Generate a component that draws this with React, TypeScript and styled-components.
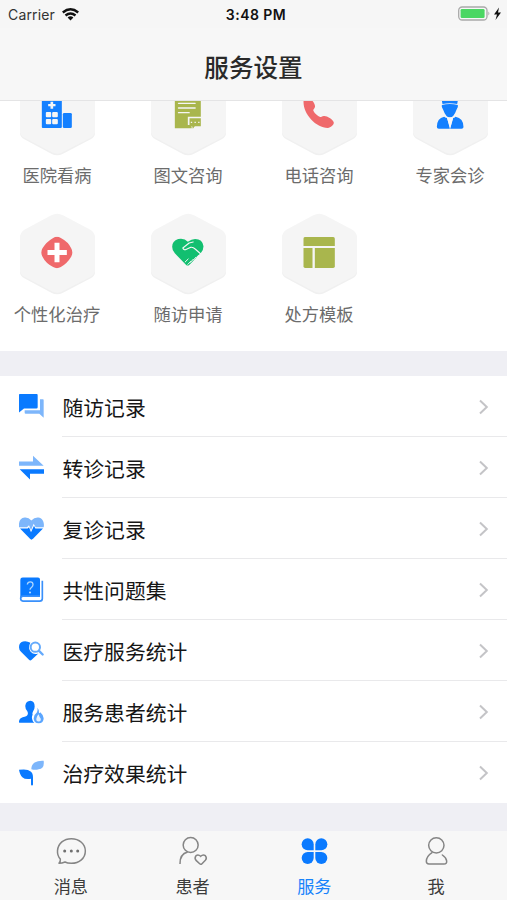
import React from "react";
import styled, { createGlobalStyle } from "styled-components";

const GlobalStyle = createGlobalStyle`
  * { box-sizing: border-box; }
  body { margin: 0; background: #fff; }
`;

const BLUE = "#0a7aff";
const LIGHT = "#7db6fb";
const OLIVE = "#a9b64d";
const RED = "#ef696b";
const GREEN = "#12bf70";

const Screen = styled.div`
  width: 507px;
  height: 900px;
  display: flex;
  flex-direction: column;
  overflow: hidden;
  background: #efeff4;
  font-family: "Noto Sans CJK SC", sans-serif;
`;

const StatusBar = styled.div`
  flex: none;
  height: 28px;
  padding: 0 5px 0 8px;
  display: grid;
  grid-template-columns: 1fr auto 1fr;
  align-items: center;
  background: #f6f6f6;
  font-family: Inter, sans-serif;
  color: #111;
`;

const Carrier = styled.div`
  display: flex;
  align-items: center;
  gap: 7px;
  font-size: 14px;
  letter-spacing: 0.15px;
  color: #333;
`;

const Clock = styled.div`
  padding-left: 2px;
  font-size: 14px;
  font-weight: 600;
  letter-spacing: 0.45px;
`;

const Battery = styled.div`
  display: flex;
  justify-content: flex-end;
`;

const Header = styled.header`
  flex: none;
  height: 73px;
  padding-top: 3px;
  display: flex;
  align-items: center;
  justify-content: center;
  background: #f7f7f7;
  border-bottom: 1px solid #e4e4e5;
  font-size: 24.6px;
  font-weight: 500;
  color: #2a2a2a;
`;

const Services = styled.section`
  flex: none;
  height: 250px;
  overflow: hidden;
  display: grid;
  grid-template-columns: repeat(4, 131px);
  grid-auto-rows: 139px;
  align-content: end;
  margin-right: -25px;
  background: #fff;
`;

const Service = styled.div`
  width: 114px;
  display: flex;
  flex-direction: column;
  align-items: center;
  gap: 5px;
`;

const ServiceName = styled.span`
  font-size: 17.3px;
  line-height: 26px;
  white-space: nowrap;
  color: #6c6c6c;
`;

const List = styled.section`
  flex: none;
  margin-top: 25px;
  background: #fff;
`;

const Row = styled.div`
  height: 61px;
  padding-left: 19px;
  display: flex;
  align-items: center;
  gap: 17px;
`;

const RowBody = styled.div<{ $last: boolean }>`
  flex: 1;
  height: 61px;
  padding: 2px 17px 0 0.5px;
  display: flex;
  align-items: center;
  justify-content: space-between;
  border-bottom: 1px solid ${(p) => (p.$last ? "transparent" : "#e9e9eb")};
  font-size: 20.8px;
  color: #161616;
`;

const TabBar = styled.nav`
  flex: none;
  height: 69px;
  margin-top: 28px;
  padding: 5px 10px 0;
  display: grid;
  grid-template-columns: repeat(4, 1fr);
  background: #f7f7f7;
`;

const Tab = styled.div<{ $active: boolean }>`
  display: flex;
  flex-direction: column;
  align-items: center;
  gap: 8px;
  font-size: 17.2px;
  line-height: 24px;
  color: ${(p) => (p.$active ? "#1783fb" : "#3c3c3c")};
`;

type Item = { name: string; box: string; art: React.ReactNode };

const services: Item[] = [
  {
    name: "医院看病",
    box: "124.5 22.5 96 96",
    art: (
      <g fill="#1480ff">
        <rect x="127" y="22" width="60" height="92" rx="3" />
        <rect x="190" y="69" width="27" height="45" rx="4" />
        <g fill="#f5f5f5">
          <path d="M153 35h8v7h7v7h-7v7h-8v-7h-7v-7h7z" />
          <rect x="139" y="66" width="16" height="16" rx="3" />
          <rect x="158" y="66" width="17" height="16" rx="3" />
          <rect x="139" y="87" width="16" height="16" rx="3" />
          <rect x="158" y="87" width="17" height="16" rx="3" />
        </g>
      </g>
    ),
  },
  {
    name: "图文咨询",
    box: "517.5 22.5 96 96",
    art: (
      <g>
        <path d="M526 22h78v58h-39v25h10l2 10h-51z" fill={OLIVE} />
        <path d="M537 40h50M537 54h50M537 68h32" stroke="#f5f5f5" strokeWidth="4" strokeLinecap="round" />
        <path d="M570 85h34v24h-18l-6 7-2-7h-8z" fill={OLIVE} />
        <path d="M574 97h4M585 97h4M596 97h4" stroke="#f5f5f5" strokeWidth="3.5" />
      </g>
    ),
  },
  {
    name: "电话咨询",
    box: "151.5 22.5 96 96",
    art: (
      <path
        d="M153 36C153 25 166 19 174 26C183 35 191 47 186 54C184 58 181 59 183 63C187 71 195 78 203 81C206 82 209 78 214 78C224 77 239 87 243 95C247 103 236 113 226 114C190 113 153 73 153 36Z"
        fill={RED}
      />
    ),
  },
  {
    name: "专家会诊",
    box: "544.5 22.5 96 96",
    art: (
      <g fill="#1480ff">
        <path d="M566 22h52l-4 20q-22-4-44 0z" />
        <path d="M568 45q24-6 48 0q2 7-4 14q-8 23-20 23t-20-23q-6-7-4-14z" />
        <path d="M575 80Q553 84 553 111Q553 116 559 116H592L584 84Q580 84 575 80ZM609 80Q633 84 633 111Q633 116 627 116H593L602 84Q606 84 609 80Z" />
        <path d="M583 83h19l-9 31z" fill="#f7f7f7" />
      </g>
    ),
  },
  {
    name: "个性化治疗",
    box: "124.5 94.5 96 96",
    art: (
      <g>
        <path
          d="M161 99Q172 92 184 99Q207 111 215 130Q222 142 215 155Q204 174 184 186Q172 193 161 186Q138 174 129 155Q122 142 129 130Q140 111 161 99Z"
          fill={RED}
        />
        <path d="M172.500 113v59M144 142.500h58" stroke="#fff" strokeWidth="15" />
      </g>
    ),
  },
  {
    name: "随访申请",
    box: "517.5 94.5 96 96",
    art: (
      <g fill="none" strokeLinecap="round" strokeLinejoin="round">
        <path
          d="M565 110Q554 98 536 102Q518 108 518 125Q518 137 526 145L560 180Q565 184 570 179L604 144Q612 136 612 124Q609 102 587 102Q576 102 565 110Z"
          fill={GREEN}
        />
        <path d="M581 111l-12 3-19 15q3 8 11 4l13-6q7-1 13 5l17 15" stroke="#f5f5f5" strokeWidth="3.500" />
        <path d="M557 171l9-9M565 178l9-9M573 172l8-9M582 165l7-8M591 157l7-7" stroke="#f5f5f5" strokeWidth="3" />
      </g>
    ),
  },
  {
    name: "处方模板",
    box: "151.5 94.5 96 96",
    art: (
      <g fill={OLIVE}>
        <path d="M157 96h85q5 0 5 5v22h-94v-22q0-5 4-5z" />
        <path d="M153 129h27v60h-22q-5 0-5-5z" />
        <path d="M187 129h60v55q0 5-5 5h-55z" />
      </g>
    ),
  },
];

const records: Item[] = [
  {
    name: "随访记录",
    box: "57 41.5 78 78",
    art: (
      <g>
        <path d="M120 57h9q2 0 2 3v53l-13-12H77q-3 0-3-3v-8h46z" fill={LIGHT} />
        <path d="M60 41h49q4 0 4 4v36q0 4-4 4H72L57 97V45q0-4 3-4z" fill={BLUE} />
      </g>
    ),
  },
  {
    name: "转诊记录",
    box: "57 223.5 78 78",
    art: (
      <g>
        <path d="M57 243h42v-17l32 30H57z" fill={LIGHT} />
        <path d="M132 266H59l31 31v-17h42z" fill={BLUE} />
      </g>
    ),
  },
  {
    name: "复诊记录",
    box: "57 406.5 78 78",
    art: (
      <g>
        <path
          d="M57 440C55 424 61 412 74 411Q86 410 94 420Q103 410 115 411C128 413 134 426 131 440H107L101 430L93 449L87 434L81 440Z"
          fill={LIGHT}
        />
        <path d="M60 444H83L87 440L93 455L102 436L106 444H129L99 475Q94 480 90 475Z" fill={BLUE} />
      </g>
    ),
  },
  {
    name: "共性问题集",
    box: "57 49.5 78 78",
    art: (
      <g fill="none">
        <path d="M68 51h46q6 0 6 6v52H67q-5 0-6 4V58q0-7 7-7z" fill={BLUE} />
        <path d="M120 107H69q-7 0-7 7t7 8h50q8 0 8-8V61" stroke="#3990fb" strokeWidth="5" />
        <path d="M82 72q1-8 9-8t8 8q0 5-4 8-5 4-5 8" stroke="#add6ff" strokeWidth="4" />
        <circle cx="90" cy="96" r="3" fill="#c2e1ff" />
      </g>
    ),
  },
  {
    name: "医疗服务统计",
    box: "57 232.5 78 78",
    art: (
      <g fill="none">
        <path
          d="M91 247Q80 240 69 243Q57 246 57 260Q57 268 63 274L87 298Q91 302 95 298L115 279Q101 284 92 274Q83 262 91 247Z"
          fill={BLUE}
        />
        <circle cx="106" cy="260" r="14" stroke="#64aafc" strokeWidth="6" />
        <path d="M117 271l11 11" stroke="#64aafc" strokeWidth="7" strokeLinecap="round" />
      </g>
    ),
  },
  {
    name: "服务患者统计",
    box: "57 415.5 78 78",
    art: (
      <g>
        <path
          d="M91 421Q104 422 104 438Q104 447 99 453Q96 459 98 463Q94 470 97 478Q98 484 103 487H60Q56 487 57 482Q58 473 68 470Q81 468 83 462Q85 456 81 451Q75 443 76 435Q78 422 91 421Z"
          fill={BLUE}
        />
        <path
          d="M112 442q5 5 5 14q1 4 4-1q10 9 10 18q0 15-15 15t-15-15q0-10 10-18q3-5 1-13z"
          fill="#5ba6ff"
        />
        <path d="M116 461q2 8 6 13q2 9-6 9t-7-8q0-8 7-14z" fill="#e6f2ff" />
      </g>
    ),
  },
  {
    name: "治疗效果统计",
    box: "57 598.5 78 78",
    art: (
      <g>
        <path d="M131 601Q134 624 116 626Q106 629 94 626Q94 612 104 606Q114 600 131 601Z" fill={LIGHT} />
        <path
          d="M57 628Q83 624 92 633Q99 638 99 651V672Q99 675 96 675T93 672V655Q75 658 67 650Q60 645 57 628Z"
          fill={BLUE}
        />
      </g>
    ),
  },
];

const tabs: Item[] = [
  {
    name: "消息",
    box: "165 138 96 90",
    art: (
      <g fill="none" stroke="#858585" strokeWidth="4.500" strokeLinejoin="round">
        <path d="M181 207C172 198 172 190 172.500 182C174 160 192 146 214 146C238 146 256 162 256 183C256 205 238 220 214 220Q202 220 195 216Q186 220 177 220Q182 214 181 207Z" />
        <g fill="#707070" stroke="none">
          <circle cx="194" cy="183" r="4.500" />
          <circle cx="214" cy="183" r="4.500" />
          <circle cx="233" cy="183" r="4.500" />
        </g>
      </g>
    ),
  },
  {
    name: "患者",
    box: "532 138 96 90",
    art: (
      <g fill="none" stroke="#858585" strokeWidth="4.500">
        <circle cx="573" cy="165" r="22.500" />
        <path d="M541 222Q540 192 564 186" />
        <path
          d="M603 199Q596 192 589 197Q583 204 590 212L600 221Q603 225 607 221L617 211Q623 204 617 197Q610 192 603 199Z"
        />
      </g>
    ),
  },
  {
    name: "服务",
    box: "136 138 96 90",
    art: (
      <g fill={BLUE}>
        <path d="M183 181V163A18 18 0 1 0 165 181Z" />
        <path d="M188 181V163A18 18 0 1 1 206 181Z" />
        <path d="M183 186V204A18 18 0 1 1 165 186Z" />
        <path d="M188 186V204A18 18 0 1 0 206 186Z" />
      </g>
    ),
  },
  {
    name: "我",
    box: "501 138 96 90",
    art: (
      <g fill="none" stroke="#858585" strokeWidth="4.500" strokeLinecap="round">
        <circle cx="550" cy="166" r="23" />
        <path d="M537 188C528 194 520 204 520 214Q520 222 528 222H573Q582 222 581 213Q580 203 568 195" />
      </g>
    ),
  },
];

const HEX =
  "M103 10Q120 0 138 10L220 53Q234 62 234 76V176Q234 187 221 194L138 237Q120 247 103 237L22 194Q9 187 9 176V76Q9 62 22 53Z";

export default function App() {
  return (
    <>
      <GlobalStyle />
      <Screen>
        <StatusBar>
          <Carrier>
            Carrier
            <svg width="17" height="13" viewBox="0 0 17 13" fill="none" stroke="#111" strokeWidth="2.400">
              <path d="M.8 4.500Q8.500-1.800 16.200 4.500M3.500 7.500Q8.500 3.300 13.500 7.500" />
              <path d="M5.600 9.400Q8.500 7.200 11.400 9.400L8.500 12.500z" fill="#111" stroke="none" />
            </svg>
          </Carrier>
          <Clock>3:48 PM</Clock>
          <Battery>
            <svg width="44" height="16" viewBox="0 0 44 16">
              <rect x=".7" y="1" width="28.300" height="13" rx="3.500" fill="#f7f7f7" stroke="#a9a9a9" strokeWidth="1.300" />
              <rect x="2.600" y="3" width="24" height="9" rx="1.300" fill="#4bd763" />
              <path d="M30.400 5.500q2 2 0 4z" fill="#a9a9a9" />
              <path d="M41 1.500L36 8.500h3l-1.500 5.500L43 6.500h-3z" fill="#111" />
            </svg>
          </Battery>
        </StatusBar>
        <Header>服务设置</Header>
        <Services>
          {services.map((s) => (
            <Service key={s.name}>
              <svg width="80" height="84" viewBox="0 0 240 252">
                <path d={HEX} fill="#f0f0f0" transform="translate(0 5)" />
                <path d={HEX} fill="#f5f5f5" />
                <svg x="72" y="73.5" width="96" height="96" viewBox={s.box}>
                  {s.art}
                </svg>
              </svg>
              <ServiceName>{s.name}</ServiceName>
            </Service>
          ))}
        </Services>
        <List>
          {records.map((r, i) => (
            <Row key={r.name}>
              <svg width="26" height="26" viewBox={r.box}>
                {r.art}
              </svg>
              <RowBody $last={i === records.length - 1}>
                {r.name}
                <svg width="12" height="16" viewBox="0 0 12 16" fill="none" stroke="#c4c4c7" strokeWidth="2">
                  <path d="M2 1.500L8.800 8L2 14.500" />
                </svg>
              </RowBody>
            </Row>
          ))}
        </List>
        <TabBar>
          {tabs.map((t) => (
            <Tab key={t.name} $active={t.name === "服务"}>
              <svg width="32" height="30" viewBox={t.box}>
                {t.art}
              </svg>
              {t.name}
            </Tab>
          ))}
        </TabBar>
      </Screen>
    </>
  );
}
